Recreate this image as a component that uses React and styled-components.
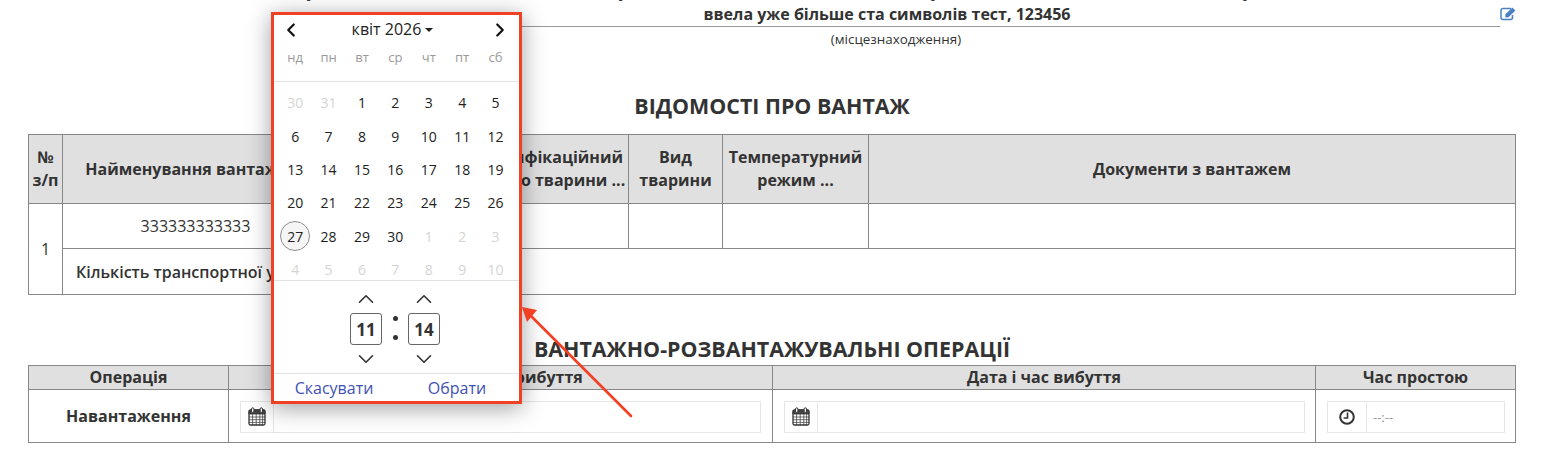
import React from 'react'
import styled, { createGlobalStyle } from 'styled-components'
import { ChevronLeft, ChevronRight, ChevronUp, ChevronDown } from 'lucide-react'

const GlobalStyle = createGlobalStyle`
  html, body {
    margin: 0;
    padding: 0;
    height: 462px;
    overflow: hidden;
    background: #fff;
    font-family: "Open Sans", "Noto Sans", sans-serif;
    color: #333;
  }
`

const Page = styled.div`
  position: relative;
  width: 1544px;
  height: 462px;
  overflow: hidden;
  padding: 0 28px;
  box-sizing: border-box;
`

const AddressBlock = styled.div`
  margin-top: -17px;
  display: grid;
  grid-template-columns: 1fr 16px;
`

const AddressValue = styled.div`
  margin-left: 246px;
  border-bottom: 1px solid #999;
  text-align: center;
  font-size: 16px;
  font-weight: 700;
  line-height: 21px;
  height: 43px;
  white-space: nowrap;
`

const AddressFirstLine = styled.div`
  margin: -2px 0 2px -246px;
  width: 1472px;
  overflow: hidden;
`

const EditIcon = styled.div`
  color: #4a80c4;
  padding-top: 24px;
  line-height: 16px;
`

const Caption = styled.div`
  text-align: center;
  font-size: 13.4px;
  line-height: 16px;
  margin-top: 4px;
  padding-left: 248px;
`

const SectionTitle = styled.h2`
  margin: ${p => p.$top}px 0 0;
  text-align: center;
  font-size: 21.4px;
  line-height: 28px;
  font-weight: 700;
  color: #333;
  text-transform: uppercase;
`

const Table = styled.table`
  width: 1487px;
  table-layout: fixed;
  border-collapse: collapse;
  margin-top: ${p => p.$top}px;
`

const Col = styled.col`
  width: ${p => p.$w}px;
`

const HeadCell = styled.th`
  background: #e0e0e0;
  border: 1px solid #888;
  font-size: 16px;
  font-weight: 700;
  line-height: 23px;
  padding: 0;
  height: ${p => p.$h}px;
  text-align: center;
  color: #333;
  white-space: nowrap;
`

const Cell = styled.td`
  border: 1px solid #888;
  font-size: 16px;
  line-height: 20px;
  padding: 0;
  height: ${p => p.$h}px;
  text-align: center;
`

const NoteCell = styled(Cell)`
  text-align: left;
  padding-left: 13px;
  font-weight: 600;
  white-space: nowrap;
`

const OperationCell = styled(Cell)`
  font-weight: 700;
`

const FieldCell = styled(Cell)`
  padding: 0 ${p => p.$right}px 0 11px;
`

const Field = styled.div`
  display: flex;
  align-items: stretch;
  height: 32px;
  border: 1px solid #e6e6e6;
  box-sizing: border-box;
  margin-top: 1px;
`

const Addon = styled.span`
  flex: 0 0 ${p => p.$w}px;
  display: flex;
  align-items: center;
  justify-content: center;
  border-right: 1px solid #e6e6e6;
  color: #333;
`

const TimeValue = styled.span`
  padding-left: 6px;
  font-size: 13px;
  line-height: 30px;
  color: #999;
`

const Popover = styled.div`
  position: absolute;
  left: 271px;
  top: 12px;
  width: 251px;
  height: 392px;
  box-sizing: border-box;
  border: 3px solid #f04124;
  background: #fff;
  box-shadow: 0 4px 22px rgba(0, 0, 0, 0.38);
  display: flex;
  flex-direction: column;
`

const MonthBar = styled.div`
  display: flex;
  align-items: center;
  justify-content: space-between;
  height: 29px;
  padding: 0 8px 0 6px;
  color: #111;
`

const MonthLabel = styled.div`
  display: flex;
  align-items: center;
  gap: 4px;
  padding-right: 6px;
  font-size: 16px;
  line-height: 29px;
  color: #222;
`

const Caret = styled.span`
  width: 0;
  height: 0;
  border-left: 4px solid transparent;
  border-right: 4px solid transparent;
  border-top: 4px solid #222;
`

const DaysGrid = styled.div`
  display: grid;
  grid-template-columns: repeat(7, 33.4px);
  padding: 0 4.5px;
`

const WeekGrid = styled(DaysGrid)`
  height: 37px;
  border-bottom: 1px solid #e2e2e2;
  align-items: start;
`

const WeekDay = styled.span`
  font-size: 13px;
  line-height: 16px;
  padding-top: 5px;
  text-align: center;
  color: #9a9a9a;
`

const MonthGrid = styled(DaysGrid)`
  grid-auto-rows: 33.4px;
  padding-top: 4px;
  height: 199px;
  box-sizing: border-box;
  border-bottom: 1px solid #e2e2e2;
  overflow: hidden;
`

const Day = styled.span`
  display: flex;
  align-items: center;
  justify-content: center;
  font-size: 14px;
  color: ${p => (p.$muted ? '#d4d4d4' : '#222')};
`

const Today = styled.span`
  width: 28px;
  height: 28px;
  display: flex;
  align-items: center;
  justify-content: center;
  border: 1px solid #8c8c8c;
  border-radius: 50%;
  background: #f5f5f5;
`

const TimeRow = styled.div`
  flex: 1;
  display: flex;
  justify-content: center;
  align-items: center;
  gap: 10.5px;
  padding: 4px 3px 0 0;
  border-bottom: 1px solid #e2e2e2;
`

const Spinner = styled.div`
  display: flex;
  flex-direction: column;
  align-items: center;
  gap: 1px;
  color: #333;
`

const TimeBox = styled.div`
  width: 32px;
  height: 32px;
  box-sizing: border-box;
  border: 1px solid #666;
  border-radius: 3px;
  display: flex;
  align-items: center;
  justify-content: center;
  font-size: 17px;
  font-weight: 700;
  color: #333;
`

const Colon = styled.div`
  display: flex;
  flex-direction: column;
  gap: 14px;
  margin-bottom: 3px;
`

const Dot = styled.span`
  width: 5px;
  height: 5px;
  border-radius: 50%;
  background: #333;
`

const Actions = styled.div`
  height: 27px;
  display: grid;
  grid-template-columns: 120px 126px;
  align-items: center;
`

const ActionLink = styled.span`
  font-size: 16px;
  line-height: 26px;
  color: #3f51b5;
  text-align: center;
`

const Arrow = styled.svg`
  position: absolute;
  left: 515px;
  top: 300px;
  width: 125px;
  height: 125px;
`

const weekDays = ['нд', 'пн', 'вт', 'ср', 'чт', 'пт', 'сб']
const leading = [30, 31]
const trailing = [1, 2, 3, 4, 5, 6, 7, 8, 9, 10]
const current = Array.from({ length: 30 }, (_, i) => i + 1)

const CalendarIcon = () => (
  <svg width="18" height="19" viewBox="0 0 18 19" fill="none" stroke="#333">
    <rect x="1" y="3" width="16" height="15" rx="1.5" strokeWidth="1.3" />
    <path d="M1 4.5a1.5 1.5 0 0 1 1.5-1.5h13A1.5 1.5 0 0 1 17 4.5V7H1z" fill="#444" strokeWidth="0.8" />
    <path d="M1 10h16M1 12.7h16M1 15.4h16M4.6 7v11M8.2 7v11M11.8 7v11M14.6 7v11" strokeWidth="0.7" />
    <rect x="3.5" y="0.8" width="2.4" height="4.6" rx="1.2" fill="#fff" strokeWidth="1" />
    <rect x="12.1" y="0.8" width="2.4" height="4.6" rx="1.2" fill="#fff" strokeWidth="1" />
  </svg>
)

const ClockIcon = () => (
  <svg width="16" height="16" viewBox="0 0 16 16" fill="none" stroke="#333">
    <circle cx="8" cy="8" r="6.8" strokeWidth="2" />
    <path d="M8.5 3.6V9H4.6" strokeWidth="1.6" />
  </svg>
)

const PencilSquareIcon = () => (
  <svg width="17" height="14" viewBox="0 0 17 14" fill="none">
    <path d="M12.5 8v2.5a2 2 0 0 1-2 2H3a2 2 0 0 1-2-2V3.5a2 2 0 0 1 2-2h8" stroke="currentColor" strokeWidth="1.5" />
    <path d="M5.5 7.2L12.4 0.6l3 2.9-6.9 6.7-3.2.4z" fill="currentColor" />
  </svg>
)

const DateField = ({ right }) => (
  <FieldCell $right={right}>
    <Field>
      <Addon $w={31.5}>
        <CalendarIcon />
      </Addon>
    </Field>
  </FieldCell>
)

const DatePopover = () => (
  <Popover>
    <MonthBar>
      <ChevronLeft size={22} strokeWidth={2.4} />
      <MonthLabel>
        квіт 2026
        <Caret />
      </MonthLabel>
      <ChevronRight size={22} strokeWidth={2.4} />
    </MonthBar>
    <WeekGrid>
      {weekDays.map(d => (
        <WeekDay key={d}>{d}</WeekDay>
      ))}
    </WeekGrid>
    <MonthGrid>
      {leading.map(d => (
        <Day key={`prev-${d}`} $muted>{d}</Day>
      ))}
      {current.map(d => (
        <Day key={d}>{d === 27 ? <Today>{d}</Today> : d}</Day>
      ))}
      {trailing.map(d => (
        <Day key={`next-${d}`} $muted>{d}</Day>
      ))}
    </MonthGrid>
    <TimeRow>
      <Spinner>
        <ChevronUp size={26} strokeWidth={1.5} />
        <TimeBox>11</TimeBox>
        <ChevronDown size={26} strokeWidth={1.5} />
      </Spinner>
      <Colon>
        <Dot />
        <Dot />
      </Colon>
      <Spinner>
        <ChevronUp size={26} strokeWidth={1.5} />
        <TimeBox>14</TimeBox>
        <ChevronDown size={26} strokeWidth={1.5} />
      </Spinner>
    </TimeRow>
    <Actions>
      <ActionLink>Скасувати</ActionLink>
      <ActionLink>Обрати</ActionLink>
    </Actions>
  </Popover>
)

const App = () => (
  <Page>
    <GlobalStyle />
    <AddressBlock>
      <AddressValue>
        <AddressFirstLine>
          ввела уже більше ста символів тест, ввела уже більше ста символів тест, ввела уже більше ста символів тест, ввела уже
        </AddressFirstLine>
        ввела уже більше ста символів тест, 123456
      </AddressValue>
      <EditIcon>
        <PencilSquareIcon />
      </EditIcon>
    </AddressBlock>
    <Caption>(місцезнаходження)</Caption>

    <SectionTitle $top={45}>Відомості про вантаж</SectionTitle>
    <Table $top={14}>
      <colgroup>
        <Col $w={34} />
        <Col $w={266} />
        <Col $w={134} />
        <Col $w={166} />
        <Col $w={94} />
        <Col $w={146} />
        <Col $w={647} />
      </colgroup>
      <thead>
        <tr>
          <HeadCell $h={68}>№<br />з/п</HeadCell>
          <HeadCell $h={68}>Найменування вантажу ...</HeadCell>
          <HeadCell $h={68} />
          <HeadCell $h={68}>Ідентифікаційний<br />код про тварини ...</HeadCell>
          <HeadCell $h={68}>Вид<br />тварини</HeadCell>
          <HeadCell $h={68}>Температурний<br />режим ...</HeadCell>
          <HeadCell $h={68}>Документи з вантажем</HeadCell>
        </tr>
      </thead>
      <tbody>
        <tr>
          <Cell rowSpan={2}>1</Cell>
          <Cell $h={44}>333333333333</Cell>
          <Cell $h={44} />
          <Cell $h={44} />
          <Cell $h={44} />
          <Cell $h={44} />
          <Cell $h={44} />
        </tr>
        <tr>
          <NoteCell colSpan={6} $h={45}>Кількість транспортної упаковки</NoteCell>
        </tr>
      </tbody>
    </Table>

    <SectionTitle $top={40}>Вантажно-розвантажувальні операції</SectionTitle>
    <Table $top={2}>
      <colgroup>
        <Col $w={200} />
        <Col $w={544} />
        <Col $w={543} />
        <Col $w={200} />
      </colgroup>
      <thead>
        <tr>
          <HeadCell $h={23}>Операція</HeadCell>
          <HeadCell $h={23}>Дата і час прибуття</HeadCell>
          <HeadCell $h={23}>Дата і час вибуття</HeadCell>
          <HeadCell $h={23}>Час простою</HeadCell>
        </tr>
      </thead>
      <tbody>
        <tr>
          <OperationCell $h={52}>Навантаження</OperationCell>
          <DateField right={11} />
          <DateField right={10} />
          <FieldCell $right={10}>
            <Field>
              <Addon $w={38}>
                <ClockIcon />
              </Addon>
              <TimeValue>--:--</TimeValue>
            </Field>
          </FieldCell>
        </tr>
      </tbody>
    </Table>

    <DatePopover />

    <Arrow viewBox="0 0 125 125">
      <path d="M116 116L15 15" stroke="#f04124" strokeWidth="2.6" strokeLinecap="round" />
      <path d="M7 7L22 10L12 22z" fill="#f04124" />
    </Arrow>
  </Page>
)

export default App
